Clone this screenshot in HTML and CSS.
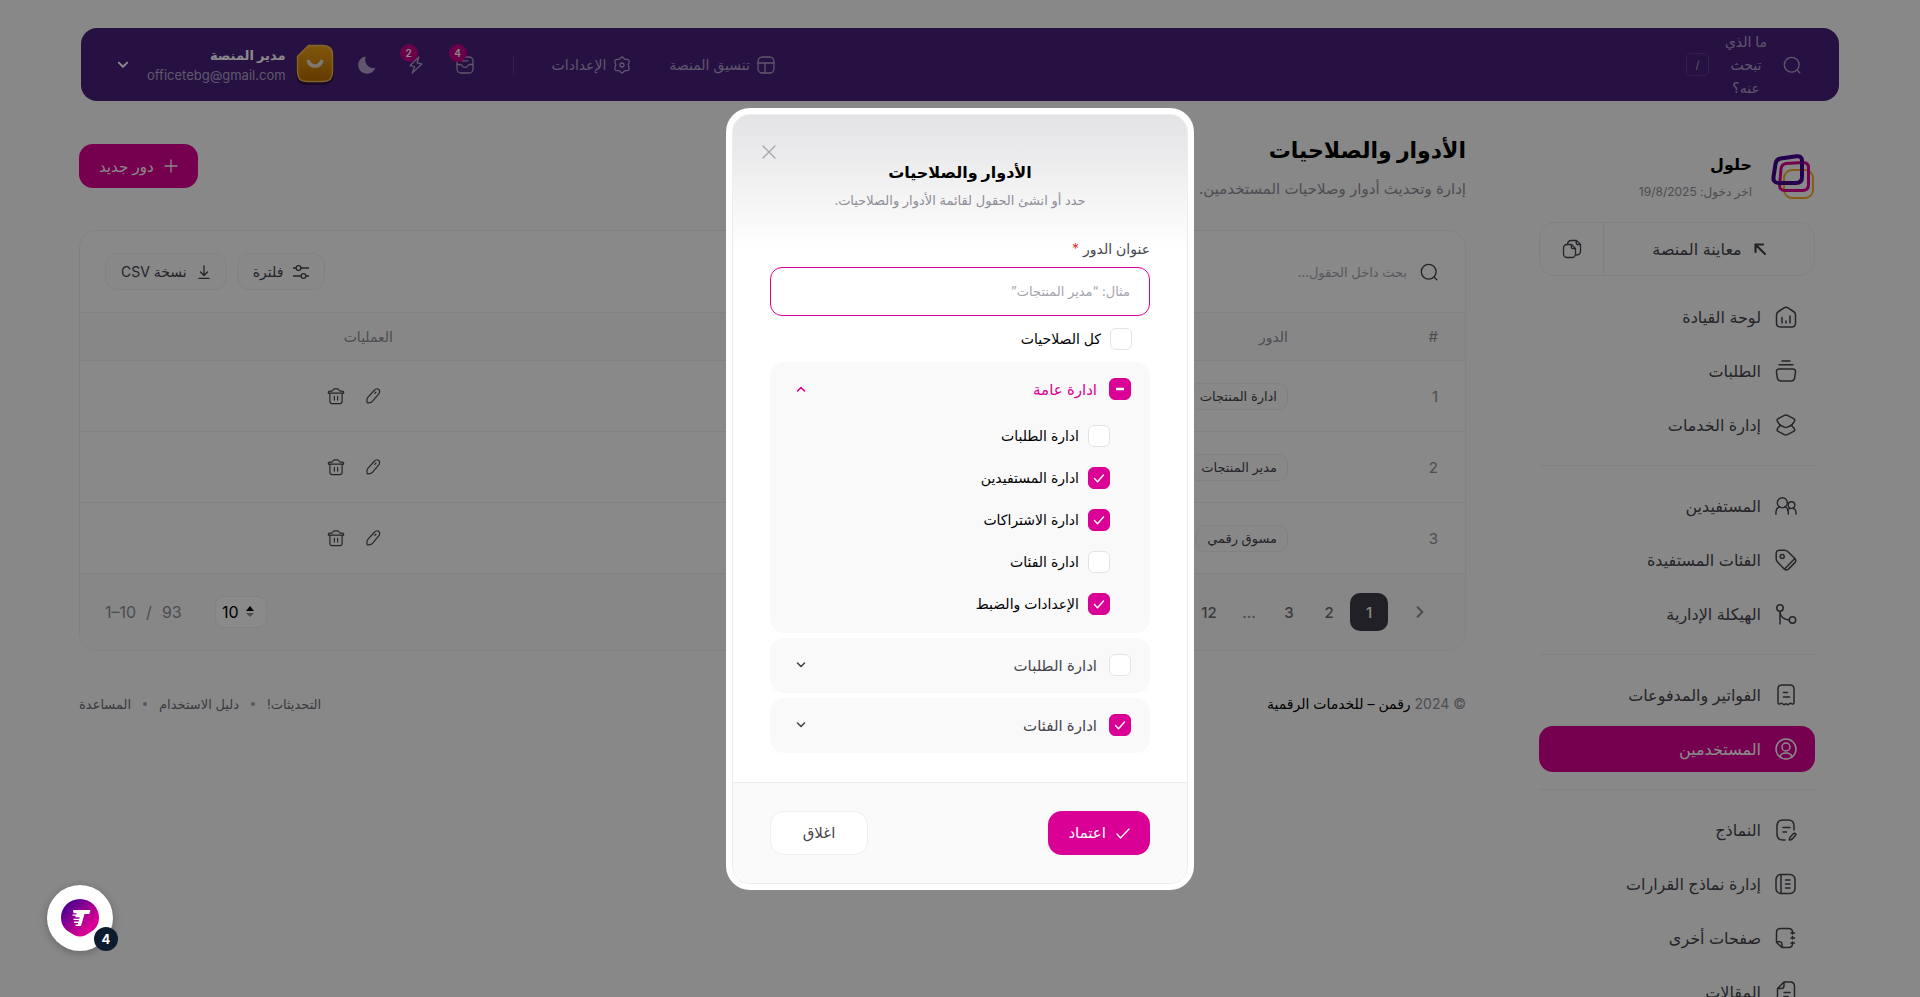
FILE: index.html
```html
<!DOCTYPE html>
<html lang="ar" dir="rtl">
<head>
<meta charset="utf-8">
<meta name="viewport" content="width=device-width, initial-scale=1">
<title>الأدوار والصلاحيات</title>
<link rel="stylesheet" href="styles.css">
</head>
<body>
<svg class="defs" aria-hidden="true">
  <symbol id="i-search" viewBox="0 0 18 18"><circle cx="8.700" cy="8.700" r="7.400"/><path d="M14.500 14.500l2.300 2.300"/></symbol>
  <symbol id="i-pencil" viewBox="0 0 20 20"><path d="M11.500 3.600c1.500-1.700 3.600-1.900 4.900-.8 1.400 1.200 1.400 3.300 0 4.900l-6.800 8c-.9 1-1.800 1.500-3 1.700l-1.900.3c-.9.100-1.400-.3-1.400-1.200l0-2.200c0-1.200.4-2.200 1.200-3.100z"/><path d="M12 7.200l1.300-1.500"/></symbol>
  <symbol id="i-trash" viewBox="0 0 20 20"><path d="M3.200 7v8.800c0 1.800.9 2.700 2.700 2.700h8.200c1.800 0 2.700-.9 2.700-2.700V7M1.500 6.800h17c.2-1.600-.4-2.300-1.800-2.300h-1.500c-.9 0-1.400-.3-1.700-1-.4-1-.9-1.500-1.900-1.500H8.400c-1 0-1.500.5-1.900 1.500-.3.700-.8 1-1.700 1H3.300c-1.400 0-2 .7-1.800 2.300zM8.200 10.500v4M11.800 10.500v4"/></symbol>
  <symbol id="i-down" viewBox="0 0 10 10"><path d="M1.500 3L5 6.500 8.500 3"/></symbol>
</svg>

<div class="app">
  <header class="topbar">
    <div class="top-search">
      <svg class="ic-18"><use href="#i-search"/></svg>
      <span class="top-search-text">ما الذي تبحث عنه؟</span>
      <kbd class="kbd">/</kbd>
    </div>
    <nav class="top-links">
      <a class="top-link" href="#"><svg class="ic-18" viewBox="0 0 18 18"><rect x="1" y="1" width="16" height="16" rx="4.500"/><path d="M1 7h16M8 7v10"/></svg>تنسيق المنصة</a>
      <a class="top-link" href="#"><svg class="ic-18" viewBox="0 0 18 18"><path d="M12.200 3.400C14 3.200 15.200 3 15.900 4.300 17 6.200 15.300 7 15.300 9c0 2 1.700 2.800.6 4.700-.7 1.300-1.900 1.100-3.700.9C10.600 15 10.500 17 9 17s-1.600-2-3.200-2.400c-1.800.2-3 .4-3.700-.9C1 11.800 2.700 11 2.700 9S1 6.200 2.100 4.300C2.800 3 4 3.200 5.800 3.400 7.400 3 7.500 1 9 1s1.600 2 3.200 2.400z"/><circle cx="9" cy="9" r="2"/></svg>الإعدادات</a>
      <span class="top-sep"></span>
    </nav>
    <div class="top-icons">
      <button class="icon-btn" type="button" aria-label="الرسائل"><svg class="ic-20" viewBox="0 0 20 20"><rect x="2" y="2" width="16" height="16" rx="4"/><path d="M2.200 9.500h3c1 0 1.500.4 1.900 1.200.5 1 1.200 1.600 2.900 1.600s2.400-.6 2.900-1.600c.4-.8.900-1.200 1.900-1.200h3M7 5.800h6"/></svg><span class="count">4</span></button>
      <button class="icon-btn" type="button" aria-label="النشاط"><svg class="ic-20" viewBox="0 0 20 20"><path d="M12.800 2L4 10.600l4.600 1L6.300 18l9.500-9-4.800-1.100z"/></svg><span class="count">2</span></button>
      <button class="icon-btn" type="button" aria-label="الوضع الليلي"><svg class="ic-20 moon" viewBox="0 0 20 20"><path d="M8.600 1.500C4 2.200 1.200 5.800 1.200 10c0 5 4 8.700 8.800 8.700 4 0 7.300-2.500 8.500-6.200-5.800 2.300-12-3.700-9.900-11z"/></svg></button>
    </div>
    <div class="account">
      <svg class="avatar" viewBox="0 0 38 42"><defs><linearGradient id="gold" x1="0" y1="0" x2="0" y2="1"><stop offset="0" stop-color="#efa21a"/><stop offset="1" stop-color="#b86b00"/></linearGradient></defs><path d="M13 4h14c7 0 11 4 11 11v15c0 7-4 11-11 11H11C4 41 0 37 0 30V15z" fill="#30124d"/><path d="M12.500 1.500H27c6 0 9.500 3.500 9.500 9.500v17c0 6-3.500 9.500-9.500 9.500H11C5 37.500 1.500 34 1.500 28V12.500z" fill="url(#gold)" stroke="#f2b84f" stroke-width="1.500"/><path d="M12.500 17.500c2.500 6 10.500 6 13 0" fill="none" stroke="#e8dfd0" stroke-width="3.600" stroke-linecap="round"/></svg>
      <div class="account-text"><strong class="account-name">مدير المنصة</strong><span class="account-mail">officetebg@gmail.com</span></div>
      <button class="icon-btn account-more" type="button" aria-label="قائمة الحساب"><svg class="ic-12"><use href="#i-down"/></svg></button>
    </div>
  </header>

  <div class="columns">
    <aside class="sidebar">
      <div class="brand">
        <svg class="brand-logo" viewBox="0 0 44 46"><rect x="13" y="16" width="29" height="28" rx="8" fill="none" stroke="#f5a623" stroke-width="1.800"/><path d="M15 9.500l17-1c3.500 0 5.500 1.700 5.500 5v17c0 4-2 6-6 6H14c-4 0-5.800-2-5.300-6L10 15c.5-3.500 2-5.200 5-5.500z" fill="none" stroke="#db0095" stroke-width="3"/><path d="M9.500 4.500l16-2.300c3.500-.4 5.500 1.200 5.500 4.800V23c0 4-2 6-6 6H8c-4 0-6-2-5.500-6L4.500 10c.5-3.500 2-5 5-5.500z" fill="none" stroke="#43008f" stroke-width="4"/></svg>
        <div class="brand-text"><strong class="brand-name">حلول</strong><span class="brand-sub">اخر دخول: 19/8/2025</span></div>
      </div>
      <div class="preview">
        <a class="preview-main" href="#"><svg class="ic-12 bold" viewBox="0 0 12 12"><path d="M1.500 9V1.500H9M1.500 1.500l9.500 9.500"/></svg>معاينة المنصة</a>
        <button class="preview-copy" type="button" aria-label="نسخ الرابط"><svg class="ic-20" viewBox="0 0 20 20"><path d="M5.500 5.500C5.600 2.700 6.700 1.500 9.500 1.500h5l4 4V12c0 2.600-1.200 3.800-4 4M14.200 1.800v1.700c0 1.500.7 2.200 2.200 2.200h1.800"/><path d="M9.500 5.500H5.300C2.700 5.500 1.500 6.700 1.500 9.300v5.400c0 2.600 1.200 3.800 3.800 3.800h4.400c2.600 0 3.800-1.200 3.800-3.800V9.500zM9.300 5.800v1.700c0 1.500.7 2.200 2.200 2.200h1.800"/></svg></button>
      </div>
      <nav class="menu">
        <a class="item" href="#"><svg class="ic-22" viewBox="0 0 22 22"><path d="M9 1.900c1.400-.9 2.600-.9 4 0l5.500 3.600c1.400.9 2 2 2 3.600V17c0 2.700-1.300 4-4 4h-11c-2.700 0-4-1.300-4-4V9.100c0-1.600.6-2.700 2-3.600zM7 17v-5.500M11 17v-2M15 17v-7"/></svg>لوحة القيادة</a>
        <a class="item" href="#"><svg class="ic-22" viewBox="0 0 22 22"><path d="M7 1h8M4 4.700h14M4.500 9h13c2.200 0 3.300 1.200 3 3.200l-.8 5.400c-.4 2.300-1.500 3.400-3.700 3.400H6c-2.200 0-3.300-1.100-3.700-3.400l-.8-5.400C1.200 10.200 2.300 9 4.500 9z"/></svg>الطلبات</a>
        <a class="item" href="#"><svg class="ic-22" viewBox="0 0 22 22"><path d="M9.400 1.400c1-.5 2-.5 3 0l5.800 2.900c1.900 1 1.900 2.200.8 3.700l-1.600 2.300c-.5.600-.9.900-1.500 1.200l-3.500 1.700c-1 .5-2 .5-3 0l-3.500-1.700c-.6-.3-1-.6-1.500-1.200L2.800 8C1.700 6.500 1.700 5.300 3.600 4.300z"/><path d="M5.500 11.200L2.900 14c-1.200 1.500-1.100 2.800.7 3.700l5.800 3c1 .5 2 .5 3 0l5.800-3c1.800-.9 1.900-2.200.7-3.700l-2.600-2.800"/></svg>إدارة الخدمات</a>
        <hr class="rule">
        <a class="item" href="#"><svg class="ic-22" viewBox="0 0 24 22"><circle cx="8" cy="7.500" r="5.500"/><path d="M1 20v-2c0-3.500 2-5.500 4.500-6M10.500 12c2.500.5 4 2.500 4 6v2"/><circle cx="18" cy="10" r="3.600"/><path d="M23 20v-1.500c0-2.700-1.300-4.300-3.500-4.900M16.500 13.600c-1.300.3-2.200 1-2.700 2.200"/></svg>المستفيدين</a>
        <a class="item" href="#"><svg class="ic-22" viewBox="0 0 22 22"><path d="M1.200 8V4.500C1.200 2.300 2.300 1.200 4.500 1.200h5c1.300 0 2.300.4 3.200 1.300l7 6.800c1.500 1.600 1.500 3 0 4.600l-6 6c-1.600 1.500-3 1.500-4.600 0l-6.600-7c-.9-.9-1.300-1.700-1.300-2.900zM9.500 20l10.300-10.500"/><circle cx="7.200" cy="7.400" r="2"/></svg>الفئات المستفيدة</a>
        <a class="item" href="#"><svg class="ic-22" viewBox="0 0 22 22"><circle cx="5" cy="5" r="3.200"/><circle cx="17.500" cy="17" r="3.200"/><path d="M5 8.500V21M5 8.500c.3 5 4 8 9 8.500"/></svg>الهيكلة الإدارية</a>
        <hr class="rule">
        <a class="item" href="#"><svg class="ic-22" viewBox="0 0 22 22"><path d="M3 18.500V5c0-2.700 1.300-4 4-4h8c2.700 0 4 1.300 4 4v13.500c0 1.500-1.200 2-2.300 1.200-.9-.6-1.700-.5-2.300.1-.8.900-1.700 1.200-2.600.3-.6-.6-1-.6-1.600 0-.9.900-1.800.6-2.600-.3-.6-.6-1.400-.7-2.300-.1-1.100.8-2.300.3-2.300-1.200zM8.500 8.500h4M8.500 13h6"/></svg>الفواتير والمدفوعات</a>
        <a class="item item-active" href="#"><svg class="ic-22" viewBox="0 0 22 22"><circle cx="11" cy="11" r="10"/><circle cx="11" cy="9" r="4"/><path d="M5 19c.5-2.500 2.800-4 6-4s5.500 1.500 6 4"/></svg>المستخدمين</a>
        <hr class="rule">
        <a class="item" href="#"><svg class="ic-22" viewBox="0 0 22 22"><path d="M19 11V7c0-4-2-6-6-6H8C4 1 2 3 2 7v8c0 4 2 6 6 6h2M8 8.500h7M8 13h3.500M18.500 14.600c.8-.8 1.700-.4 2 0 .5.600.4 1.400-.2 2l-3 3.300c-.7.700-1.700 1.100-3 1.100 0-1.300.3-2.300 1-3z"/></svg>النماذج</a>
        <a class="item" href="#"><svg class="ic-22" viewBox="0 0 22 22"><rect x="1" y="1.500" width="19" height="19" rx="5"/><path d="M6 1.500v19M10.500 7h4.500M10.500 11h4.500M10.500 15h4.500"/></svg>إدارة نماذج القرارات</a>
        <a class="item" href="#"><svg class="ic-22" viewBox="0 0 22 22"><path d="M17.500 7V5.500c0-2.700-1.300-4-4-4h-8c-2.700 0-4 1.300-4 4v10l5.500 5h6.500c2.700 0 4-1.300 4-4V15M1.700 14.500l3.300.3c1.300.2 2 .8 2 2.200v3M17.500 4v3M17.500 9.500V12M17.500 15v2M16 6h3.500M16 11h3.500M16 16h3.500"/></svg>صفحات أخرى</a>
        <a class="item" href="#"><svg class="ic-22" viewBox="0 0 22 22"><path d="M9 1h6c3 0 4.500 1.500 4.500 4.500v11c0 3-1.500 4.500-4.500 4.500H7c-3 0-4.500-1.500-4.500-4.500V7.500zM9 1.500v3C9 6.700 8 7.600 6 7.600H3M9 11.500h6M9 15.500h4"/></svg>المقالات</a>
      </nav>
    </aside>

    <main class="main">
      <div class="page-head">
        <div>
          <h1 class="page-title">الأدوار والصلاحيات</h1>
          <p class="page-sub">إدارة وتحديث أدوار وصلاحيات المستخدمين.</p>
        </div>
        <button class="btn btn-primary" type="button"><svg class="ic-14" viewBox="0 0 14 14"><path d="M7 1v12M1 7h12"/></svg>دور جديد</button>
      </div>

      <section class="card">
        <div class="toolbar">
          <label class="table-search"><svg class="ic-18"><use href="#i-search"/></svg><input class="table-search-input" type="text" aria-label="بحث" placeholder="بحث داخل الحقول..."></label>
          <div class="tools">
            <button class="tool" type="button"><svg class="ic-16" viewBox="0 0 16 16"><path d="M0 4h3M8 4h8M0 12h8M13 12h3"/><circle cx="5.500" cy="4" r="2.400"/><circle cx="10.500" cy="12" r="2.400"/></svg>فلترة</button>
            <button class="tool" type="button"><svg class="ic-14" viewBox="0 0 14 14"><path d="M7 1v9M3.500 7L7 10.500 10.500 7M2 13.500h10"/></svg>نسخة CSV</button>
          </div>
        </div>
        <table class="table">
          <thead><tr><th class="col-num">#</th><th>الدور</th><th class="col-act">العمليات</th></tr></thead>
          <tbody>
            <tr><td class="col-num">1</td><td><span class="tag">ادارة المنتجات</span></td><td class="col-act"><div class="acts"><button class="icon-btn" type="button" aria-label="تعديل"><svg class="ic-18"><use href="#i-pencil"/></svg></button><button class="icon-btn" type="button" aria-label="حذف"><svg class="ic-18"><use href="#i-trash"/></svg></button></div></td></tr>
            <tr><td class="col-num">2</td><td><span class="tag">مدير المنتجات</span></td><td class="col-act"><div class="acts"><button class="icon-btn" type="button" aria-label="تعديل"><svg class="ic-18"><use href="#i-pencil"/></svg></button><button class="icon-btn" type="button" aria-label="حذف"><svg class="ic-18"><use href="#i-trash"/></svg></button></div></td></tr>
            <tr><td class="col-num">3</td><td><span class="tag">مسوق رقمي</span></td><td class="col-act"><div class="acts"><button class="icon-btn" type="button" aria-label="تعديل"><svg class="ic-18"><use href="#i-pencil"/></svg></button><button class="icon-btn" type="button" aria-label="حذف"><svg class="ic-18"><use href="#i-trash"/></svg></button></div></td></tr>
          </tbody>
        </table>
        <div class="card-foot">
          <div class="pages">
            <button class="page page-prev" type="button" aria-label="السابق"><svg class="ic-12" viewBox="0 0 10 10"><path d="M3 1l4 4-4 4"/></svg></button>
            <button class="page page-current" type="button">1</button>
            <button class="page" type="button">2</button>
            <button class="page" type="button">3</button>
            <span class="page page-dots">...</span>
            <button class="page" type="button">12</button>
          </div>
          <div class="range">
            <div class="size"><svg class="size-arrows" viewBox="0 0 8 12"><path class="arrow-up" d="M0 5l4-5 4 5z"/><path class="arrow-down" d="M0 7h8l-4 4z"/></svg><select class="size-select" aria-label="عدد الصفوف"><option>10</option></select></div>
            <span class="range-text" dir="ltr"><span>1–10</span><span>/</span><span>93</span></span>
          </div>
        </div>
      </section>

      <footer class="footer">
        <p class="copyright">© 2024 <b>رقمن – للخدمات الرقمية</b></p>
        <nav class="foot-links"><a href="#">التحديثات!</a><i class="dot"></i><a href="#">دليل الاستخدام</a><i class="dot"></i><a href="#">المساعدة</a></nav>
      </footer>
    </main>
  </div>
</div>

<div class="overlay">
  <form class="modal" role="dialog" aria-labelledby="dialog-title">
    <div class="modal-inner">
      <div class="modal-body">
        <button class="icon-btn close" type="button" aria-label="اغلاق"><svg class="ic-14" viewBox="0 0 14 14"><path d="M1 1l12 12M13 1L1 13"/></svg></button>
        <h2 class="modal-title" id="dialog-title">الأدوار والصلاحيات</h2>
        <p class="modal-sub">حدد أو انشئ الحقول لقائمة الأدوار والصلاحيات.</p>
        <label class="field-label" for="role">عنوان الدور <span class="req">*</span></label>
        <input class="field" id="role" type="text" placeholder="مثال: “مدير المنتجات”">
        <label class="check-row check-all"><input class="check" type="checkbox">كل الصلاحيات</label>
        <div class="groups">
          <section class="group">
            <div class="group-head group-open"><label class="group-label"><input class="check check-partial" type="checkbox" checked>ادارة عامة</label><button class="icon-btn" type="button" aria-label="طي"><svg class="ic-10 up"><use href="#i-down"/></svg></button></div>
            <div class="children">
              <label class="check-row"><input class="check" type="checkbox">ادارة الطلبات</label>
              <label class="check-row"><input class="check" type="checkbox" checked>ادارة المستفيدين</label>
              <label class="check-row"><input class="check" type="checkbox" checked>ادارة الاشتراكات</label>
              <label class="check-row"><input class="check" type="checkbox">ادارة الفئات</label>
              <label class="check-row"><input class="check" type="checkbox" checked>الإعدادات والضبط</label>
            </div>
          </section>
          <section class="group"><div class="group-head"><label class="group-label"><input class="check" type="checkbox">ادارة الطلبات</label><button class="icon-btn" type="button" aria-label="توسيع"><svg class="ic-10"><use href="#i-down"/></svg></button></div></section>
          <section class="group"><div class="group-head"><label class="group-label"><input class="check" type="checkbox" checked>ادارة الفئات</label><button class="icon-btn" type="button" aria-label="توسيع"><svg class="ic-10"><use href="#i-down"/></svg></button></div></section>
        </div>
      </div>
      <div class="modal-foot">
        <button class="btn btn-primary" type="button"><svg class="ic-14" viewBox="0 0 14 14"><path d="M1 8l3.500 4L13 3"/></svg>اعتماد</button>
        <button class="btn btn-plain" type="button">اغلاق</button>
      </div>
    </div>
  </form>
</div>

<button class="chat" type="button" aria-label="المحادثة">
  <svg class="chat-logo" viewBox="0 0 38 38"><defs><linearGradient id="chatg" x1="0" y1="0" x2="1" y2="1"><stop offset=".1" stop-color="#43008f"/><stop offset=".75" stop-color="#db0095"/></linearGradient></defs><path d="M19 0c11 0 19 8.500 19 18.500 0 7-3.500 12-9 15l-4.500 2.800c-3.500 1.600-7.500 1.600-11 0L9 33.500C3.500 30.500 0 25.500 0 18.500 0 8.500 8 0 19 0z" fill="url(#chatg)"/><path d="M12 11h17.500l-1.200 4h-4.800l-3.500 12h-5.500v-1.400h2.200l.4-1.600h-4v-1.400h4.400l.4-1.500h-5.400v-1.400h5.800l.4-1.500h-4.200v-1.400h-3v-1.400h4v-1.100h-3z" fill="#fff"/></svg>
  <span class="chat-count">4</span>
</button>
</body>
</html>
```

FILE: styles.css
```css
:root {
  --accent: #db0095;
  --ink: #45444c;
  --muted: #8f8e98;
  --line: #efeff0;
  --purple: #47207b;
}

* { box-sizing: border-box; }

body {
  margin: 0;
  height: 100vh;
  overflow: hidden;
  background: #fcfcfc;
  color: var(--ink);
  font-family: Inter, "DejaVu Sans", sans-serif;
  font-size: 14px;
}

h1, h2, p { margin: 0; }
a { color: inherit; text-decoration: none; }
button, input, select { font: inherit; color: inherit; }
label { cursor: pointer; }

svg {
  flex: none;
  fill: none;
  stroke: currentColor;
  stroke-width: 1.3;
  stroke-linecap: round;
  stroke-linejoin: round;
}

.defs { position: absolute; width: 0; height: 0; }
.ic-10 { width: 10px; height: 10px; stroke-width: 1.6; }
.ic-12 { width: 12px; height: 12px; stroke-width: 1.6; }
.ic-14 { width: 14px; height: 14px; }
.ic-16 { width: 16px; height: 16px; }
.ic-18 { width: 18px; height: 18px; }
.ic-20 { width: 20px; height: 20px; }
.ic-22 { width: 22px; height: 22px; stroke-width: 1.5; }
.bold { stroke-width: 2.2; }
.up { transform: rotate(180deg); }

.icon-btn {
  position: relative;
  display: inline-flex;
  padding: 0;
  border: 0;
  background: none;
}

.app { padding: 28px 81px 0 79px; }

/* top bar */
.topbar {
  display: flex;
  align-items: center;
  height: 73px;
  margin-left: 2px;
  padding: 0 38px 0 36px;
  border-radius: 16px;
  background: var(--purple);
  color: #b3a0c8;
}
.top-search { display: flex; align-items: center; gap: 14px; margin-left: auto; }
.top-search-text { width: 46px; line-height: 23px; text-align: center; }
.kbd {
  display: grid;
  place-items: center;
  width: 23px;
  height: 23px;
  border: 1px solid #5f3b90;
  border-radius: 5px;
  font: inherit;
  font-size: 11px;
}
.top-links { display: flex; align-items: center; gap: 38px; }
.top-link { display: flex; align-items: center; gap: 7px; }
.top-sep { width: 1px; height: 20px; background: #5f3b90; }
.top-icons { display: flex; align-items: center; gap: 29px; margin-right: 38px; }
.moon { fill: #b3a0c8; stroke: none; }
.count {
  position: absolute;
  top: -11px;
  right: 8px;
  width: 18px;
  height: 18px;
  border-radius: 9px;
  background: #c4008a;
  color: #fff;
  font-size: 10px;
  font-weight: 600;
  line-height: 18px;
}
.account { display: flex; align-items: center; gap: 10px; margin-right: 23px; font-size: 13px; }
.avatar { width: 38px; height: 42px; stroke: none; }
.account-text { display: flex; flex-direction: column; line-height: 20px; }
.account-name { color: #fff; }
.account-more { margin-right: 8px; color: #fff; }

/* columns */
.columns { display: flex; gap: 73px; padding-right: 24px; }
.sidebar { flex: none; width: 276px; padding-top: 51px; }
.main { flex: 1; min-width: 0; }

.brand { display: flex; gap: 19px; align-items: center; }
.brand-logo { width: 44px; height: 46px; stroke: none; }
.brand-text { display: flex; flex-direction: column; gap: 6px; }
.brand-name { color: #000; font-size: 16px; line-height: 24px; }
.brand-sub { color: var(--muted); font-size: 12px; line-height: 20px; }

.preview {
  display: flex;
  height: 54px;
  margin-top: 20px;
  border: 1px solid var(--line);
  border-radius: 16px;
}
.preview-main { display: flex; flex: 1; align-items: center; justify-content: center; gap: 12px; font-size: 16px; }
.preview-copy {
  display: grid;
  place-items: center;
  width: 64px;
  border: 0;
  border-right: 1px solid var(--line);
  background: none;
}

.menu { display: flex; flex-direction: column; gap: 8px; margin-top: 18px; }
.item {
  display: flex;
  align-items: center;
  gap: 14px;
  height: 46px;
  padding: 0 18px;
  border-radius: 14px;
  font-size: 16px;
}
.item-active { background: var(--accent); color: #fff; }
.rule { width: 100%; height: 1px; margin: 9px 0; border: 0; background: var(--line); }

/* page head */
.page-head { display: flex; justify-content: space-between; padding: 31px 0 30px; }
.page-title { color: #000; font-size: 22px; line-height: 36px; }
.page-sub { margin-top: 10px; color: var(--muted); font-size: 15px; line-height: 22px; }

.btn {
  display: flex;
  align-items: center;
  justify-content: center;
  gap: 10px;
  height: 44px;
  padding: 0 19px;
  border: 1px solid transparent;
  border-radius: 14px;
  font-size: 15px;
}
.btn-primary { background: var(--accent); color: #fff; }
.btn-plain { min-width: 98px; border-color: var(--line); background: #fff; }
.page-head .btn { margin-top: 12px; }

/* table card */
.card { border: 1px solid var(--line); border-radius: 18px; background: #fdfdfd; overflow: hidden; }
.toolbar { display: flex; align-items: center; justify-content: space-between; height: 81px; padding: 0 27px 0 25px; }
.table-search { display: flex; align-items: center; gap: 13px; }
.table-search-input { width: 240px; padding: 0; border: 0; background: none; font-size: 13px; }
.table-search-input::placeholder { color: #a5a4ad; }
.tools { display: flex; gap: 10px; }
.tool {
  display: flex;
  align-items: center;
  gap: 10px;
  height: 37px;
  padding: 0 15px;
  border: 1px solid var(--line);
  border-radius: 12px;
  background: #fbfbfb;
  font-size: 14px;
}

.table { width: 100%; border-collapse: collapse; table-layout: fixed; }
.table th {
  height: 48px;
  padding: 0;
  border-top: 1px solid var(--line);
  border-bottom: 1px solid var(--line);
  background: #f9f9f9;
  color: var(--muted);
  font-weight: 400;
  text-align: right;
}
.table td { height: 71px; padding: 0; border-bottom: 1px solid var(--line); }
.table .col-num { width: 177px; padding-right: 27px; color: var(--muted); font-size: 15px; }
.table .col-act { width: 313px; }
.tag {
  display: inline-block;
  padding: 0 10px;
  border: 1px solid var(--line);
  border-radius: 9px;
  background: #fbfbfb;
  font-size: 13px;
  line-height: 25px;
}
.acts { display: flex; gap: 19px; padding-right: 11px; }

.card-foot { display: flex; align-items: center; justify-content: space-between; height: 76px; padding: 0 26px 0 25px; background: #f9f9f9; }
.pages { display: flex; gap: 2px; }
.page {
  display: grid;
  place-items: center;
  width: 38px;
  height: 38px;
  padding: 0;
  border: 0;
  border-radius: 10px;
  background: none;
  color: #6d6c75;
  font-size: 15px;
  font-weight: 500;
}
.page-prev { margin-left: 11px; color: var(--muted); }
.page-current { background: #3d3b47; color: #fff; }
.page-dots { color: var(--muted); }
.range { display: flex; align-items: center; gap: 33px; color: var(--muted); font-size: 16px; }
.range-text { display: flex; gap: 10px; }
.size {
  display: flex;
  align-items: center;
  gap: 7px;
  height: 32px;
  padding: 0 12px 0 6px;
  border: 1px solid var(--line);
  border-radius: 9px;
  background: #fff;
}
.size-arrows { width: 8px; height: 12px; stroke: none; }
.arrow-up { fill: #000; }
.arrow-down { fill: #8f8e98; }
.size-select { padding: 0; border: 0; background: none; color: #000; appearance: none; }

.footer { display: flex; align-items: center; justify-content: space-between; margin-top: 41px; }
.copyright { color: var(--muted); font-size: 14px; line-height: 24px; }
.copyright b { color: #000; font-weight: 400; }
.foot-links { display: flex; align-items: center; gap: 12px; color: #6d6c75; font-size: 13px; }
.dot { width: 4px; height: 4px; border-radius: 2px; background: #a5a4ad; }

/* dialog */
.overlay {
  position: fixed;
  inset: 0;
  display: flex;
  align-items: center;
  justify-content: center;
  background: rgba(0, 0, 0, .46);
}
.modal { width: 468px; padding: 6px; border-radius: 24px; background: #fff; }
.modal-inner { border: 1px solid #ededee; border-radius: 18px; overflow: hidden; }
.modal-body {
  position: relative;
  padding: 42px 37px 29px;
  background: linear-gradient(#e4e4e6, #e9e9eb 30px, #fff 136px);
}
.close { position: absolute; top: 30px; left: 29px; color: #a5a4ad; }
.modal-title { color: #000; font-size: 16px; line-height: 30px; text-align: center; }
.modal-sub { margin-top: 2px; color: var(--muted); font-size: 13px; line-height: 22px; text-align: center; }
.field-label { display: block; margin-top: 26px; line-height: 24px; }
.req { color: #e53935; }
.field {
  display: block;
  width: 100%;
  height: 49px;
  margin-top: 6px;
  padding: 0 19px;
  border: 1px solid var(--accent);
  border-radius: 12px;
  background: #fff;
  font-size: 13px;
  outline: 0;
}
.field::placeholder { color: #a5a4ad; }

.check-row, .group-label { display: flex; align-items: center; }
.check-row { gap: 9px; height: 42px; color: #000; }
.group-label { gap: 12px; font-size: 15px; }
.check-all { height: 46px; padding-right: 18px; }

.check {
  flex: none;
  width: 22px;
  height: 22px;
  margin: 0;
  border: 1px solid #e3e3e5;
  border-radius: 6px;
  background: #fff center / 12px 12px no-repeat;
  appearance: none;
}
.check:checked {
  border-color: var(--accent);
  background-color: var(--accent);
  background-image: url("data:image/svg+xml,%3Csvg xmlns='http://www.w3.org/2000/svg' viewBox='0 0 12 12' fill='none' stroke='white' stroke-width='1.400' stroke-linecap='round' stroke-linejoin='round'%3E%3Cpath d='M1.500 6.500l3 3.200L10.500 3'/%3E%3C/svg%3E");
}
.check-partial:checked {
  background-image: url("data:image/svg+xml,%3Csvg xmlns='http://www.w3.org/2000/svg' viewBox='0 0 12 12' stroke='white' stroke-width='2.500'%3E%3Cpath d='M2 6h8'/%3E%3C/svg%3E");
}

.groups { display: flex; flex-direction: column; gap: 5px; }
.group { border-radius: 14px; background: #f9f9f9; }
.group-head { display: flex; align-items: center; justify-content: space-between; height: 55px; padding: 0 19px 0 26px; }
.group-open { color: var(--accent); }
.children { padding: 0 40px 8px; margin-top: -2px; }

.modal-foot {
  display: flex;
  align-items: center;
  justify-content: space-between;
  height: 101px;
  padding: 0 37px;
  border-top: 1px solid #ededee;
  background: #fafafa;
}

/* chat */
.chat {
  position: fixed;
  left: 47px;
  bottom: 46px;
  display: grid;
  place-items: center;
  width: 66px;
  height: 66px;
  padding: 0;
  border: 0;
  border-radius: 33px;
  background: #fff;
  box-shadow: 0 2px 8px rgba(0, 0, 0, .25);
}
.chat-logo { width: 38px; height: 38px; stroke: none; }
.chat-count {
  position: absolute;
  right: -5px;
  bottom: 0;
  width: 24px;
  height: 24px;
  border-radius: 12px;
  background: #0d1b2e;
  color: #fff;
  font-size: 13px;
  font-weight: 700;
  line-height: 24px;
}
```
